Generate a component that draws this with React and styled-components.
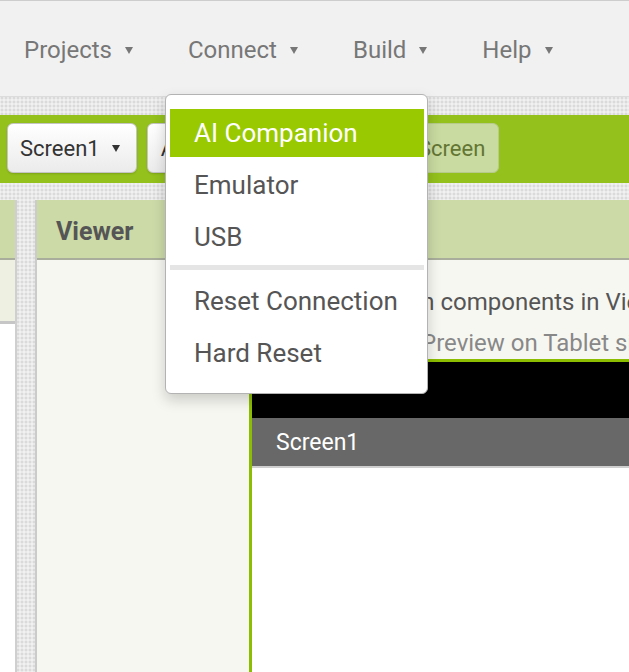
import React from "react";
import styled, { createGlobalStyle, css } from "styled-components";

const GlobalStyle = createGlobalStyle`
  html, body { margin: 0; padding: 0; background: #fff; }
  body { font-family: Roboto, "Liberation Sans", sans-serif; }
  * { box-sizing: border-box; }
`;

const texture = css`
  background-color: #e9e9e9;
  background-image:
    radial-gradient(circle, #dadada 0.8px, transparent 1px),
    radial-gradient(circle, #f1f1f1 0.8px, transparent 1px);
  background-size: 4px 4px, 4px 4px;
  background-position: 0 0, 2px 2px;
`;

const Page = styled.div`
  position: relative;
  width: 629px;
  height: 672px;
  overflow: hidden;
  display: flex;
  flex-direction: column;
  ${texture};
`;

const TopBar = styled.nav`
  height: 97px;
  flex: none;
  display: flex;
  align-items: center;
  padding: 3px 0 0 24px;
  background: #f1f1f1;
  border-top: 1px solid #cdcdcd;
  border-bottom: 1px solid #dcdcdc;
`;

const MenuItem = styled.div`
  display: flex;
  align-items: center;
  margin-right: 55px;
  font-size: 24px;
  color: #777;
  white-space: nowrap;
`;

const Caret = styled.span`
  display: inline-block;
  width: 0;
  height: 0;
  margin-left: ${(p) => p.$gap || 13}px;
  border-left: 4px solid transparent;
  border-right: 4px solid transparent;
  border-top: 7px solid ${(p) => p.$color || "#777"};
`;

const Toolbar = styled.div`
  flex: none;
  margin-top: 18px;
  height: 68px;
  display: flex;
  align-items: flex-start;
  gap: 10px;
  padding: 8px 7px 0;
  background: #94c11c;
`;

const ToolButton = styled.div`
  height: 50px;
  display: flex;
  align-items: center;
  padding: ${(p) => (p.$menu ? "0 16px 0 12px" : "0 13px")};
  font-size: 22px;
  white-space: nowrap;
  border-radius: 6px;
  ${(p) =>
    p.$disabled
      ? css`
          background: #c9dba0;
          border: 1px solid #b6ca8c;
          color: #637634;
        `
      : css`
          background: linear-gradient(#ffffff, #ebebeb);
          border: 1px solid #c4c4c4;
          color: #333;
          box-shadow: 0 1px 2px rgba(0, 0, 0, 0.15);
        `}
`;

const Panels = styled.div`
  flex: 1;
  margin-top: 17px;
  display: grid;
  grid-template-columns: 17px 1fr;
  gap: 18px;
  min-height: 0;
`;

const LeftPanel = styled.div`
  display: flex;
  flex-direction: column;
  border-right: 2px solid #cfcfcf;
  overflow: hidden;
`;

const PanelHeader = styled.div`
  flex: none;
  height: 60px;
  display: flex;
  align-items: center;
  padding-left: 19px;
  padding-top: 4px;
  background: #ccdaa8;
  border-bottom: 2px solid #a9ae9c;
  font-size: 25px;
  font-weight: 700;
  color: #555;
`;

const PaletteSearch = styled.div`
  height: 64px;
  background: #eef0e2;
  border-bottom: 3px solid #c6c6c6;
`;

const PaletteList = styled.div`
  flex: 1;
  background: #fff;
`;

const ViewerPanel = styled.div`
  display: flex;
  flex-direction: column;
  border-left: 2px solid #cbcbcb;
  overflow: hidden;
  min-width: 0;
`;

const ViewerBody = styled.div`
  flex: 1;
  display: flex;
  flex-direction: column;
  padding-top: 28px;
  background: #f7f7f2;
  min-height: 0;
`;

const CheckRow = styled.label`
  display: flex;
  align-items: center;
  gap: 8px;
  height: 28px;
  margin-bottom: 13px;
  padding-left: ${(p) => p.$indent}px;
  font-size: 24px;
  color: ${(p) => (p.$muted ? "#888" : "#555")};
  white-space: nowrap;
`;

const Box = styled.span`
  flex: none;
  width: 14px;
  height: 14px;
  border: 1px solid #888;
  border-radius: 2px;
  background: #fff;
`;

const Phone = styled.div`
  flex: 1;
  margin-top: -11px;
  margin-left: 212px;
  width: 520px;
  display: flex;
  flex-direction: column;
  border-top: 3px solid #8cbd00;
  border-left: 3px solid #8cbd00;
  background: #fff;
`;

const StatusBar = styled.div`
  height: 56px;
  background: #000;
`;

const TitleBar = styled.div`
  height: 50px;
  display: flex;
  align-items: center;
  padding-left: 24px;
  background: #686868;
  border-bottom: 2px solid #cfcfcf;
  color: #fff;
  font-size: 23px;
`;

const DropMenu = styled.ul`
  position: absolute;
  top: 94px;
  left: 165px;
  width: 263px;
  margin: 0;
  padding: 14px 3px 12px 4px;
  list-style: none;
  background: #fff;
  border: 1px solid #b3b3b3;
  border-radius: 6px;
  box-shadow: 0 6px 14px rgba(0, 0, 0, 0.18);
`;

const DropItem = styled.li`
  height: 48px;
  line-height: 48px;
  margin-bottom: 4px;
  padding-left: 24px;
  font-size: 26px;
  white-space: nowrap;
  color: ${(p) => (p.$active ? "#fff" : "#555")};
  background: ${(p) => (p.$active ? "#99c900" : "transparent")};
`;

const Separator = styled.li`
  height: 5px;
  margin: 0 0 7px;
  background: #e5e5e5;
`;

export default function App() {
  return (
    <>
      <GlobalStyle />
      <Page>
        <TopBar>
          {["Projects", "Connect", "Build", "Help"].map((m) => (
            <MenuItem key={m}>
              {m}
              <Caret />
            </MenuItem>
          ))}
        </TopBar>
        <Toolbar>
          <ToolButton $menu>
            Screen1
            <Caret $color="#333" $gap={12} />
          </ToolButton>
          <ToolButton>Add Screen ...</ToolButton>
          <ToolButton $disabled>Remove Screen</ToolButton>
        </Toolbar>
        <Panels>
          <LeftPanel>
            <PanelHeader />
            <PaletteSearch />
            <PaletteList />
          </LeftPanel>
          <ViewerPanel>
            <PanelHeader>Viewer</PanelHeader>
            <ViewerBody>
              <CheckRow $indent={220}>
                <Box />
                Display hidden components in Viewer
              </CheckRow>
              <CheckRow $indent={362} $muted>
                <Box />
                Preview on Tablet size
              </CheckRow>
              <Phone>
                <StatusBar />
                <TitleBar>Screen1</TitleBar>
              </Phone>
            </ViewerBody>
          </ViewerPanel>
        </Panels>
        <DropMenu>
          <DropItem $active>AI Companion</DropItem>
          <DropItem>Emulator</DropItem>
          <DropItem>USB</DropItem>
          <Separator />
          <DropItem>Reset Connection</DropItem>
          <DropItem>Hard Reset</DropItem>
        </DropMenu>
      </Page>
    </>
  );
}
